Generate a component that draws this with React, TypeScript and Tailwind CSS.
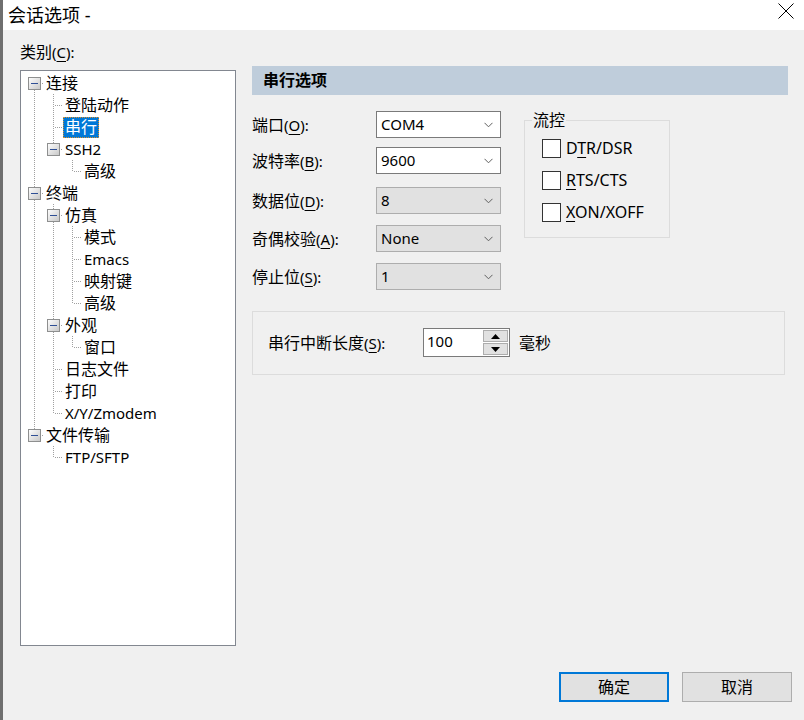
import React from 'react';

type Item = { label: string; level: number; expander?: boolean; selected?: boolean };

const items: Item[] = [
  { label: '连接', level: 0, expander: true },
  { label: '登陆动作', level: 1 },
  { label: '串行', level: 1, selected: true },
  { label: 'SSH2', level: 1, expander: true },
  { label: '高级', level: 2 },
  { label: '终端', level: 0, expander: true },
  { label: '仿真', level: 1, expander: true },
  { label: '模式', level: 2 },
  { label: 'Emacs', level: 2 },
  { label: '映射键', level: 2 },
  { label: '高级', level: 2 },
  { label: '外观', level: 1, expander: true },
  { label: '窗口', level: 2 },
  { label: '日志文件', level: 1 },
  { label: '打印', level: 1 },
  { label: 'X/Y/Zmodem', level: 1 },
  { label: '文件传输', level: 0, expander: true },
  { label: 'FTP/SFTP', level: 1 },
];

const CJK = /([\u3400-\u9fff]+)/;

function T({ s }: { s: string }) {
  return (
    <>
      {s.split(CJK).map((p, i) =>
        i % 2 === 1 ? (
          <span key={i} className="text-[16px]">
            {p}
          </span>
        ) : (
          <React.Fragment key={i}>{p}</React.Fragment>
        )
      )}
    </>
  );
}

type Row = Item & { hasNext: boolean; cont: boolean[]; first: boolean };

function buildRows(): Row[] {
  const cont: boolean[] = [];
  return items.map((it, i) => {
    let hasNext = false;
    for (let j = i + 1; j < items.length; j++) {
      if (items[j].level < it.level) break;
      if (items[j].level === it.level) {
        hasNext = true;
        break;
      }
    }
    const row: Row = { ...it, hasNext, cont: cont.slice(0, it.level), first: i === 0 };
    cont[it.level] = hasNext;
    return row;
  });
}

const DOT = '#a0a0a0';

function Cell({ full, own, top, bottom, expander }: { full?: boolean; own?: boolean; top?: boolean; bottom?: boolean; expander?: boolean }) {
  return (
    <svg width="19" height="22" className="shrink-0 block" shapeRendering="crispEdges">
      <defs>
        <linearGradient id="exg" x1="0" y1="0" x2="1" y2="1">
          <stop offset="0" stopColor="#ffffff" />
          <stop offset="1" stopColor="#c6c6c6" />
        </linearGradient>
      </defs>
      {full && <line x1="9.5" y1="0" x2="9.5" y2="22" stroke={DOT} strokeDasharray="1 1" />}
      {own && top && <line x1="9.5" y1="0" x2="9.5" y2="11" stroke={DOT} strokeDasharray="1 1" />}
      {own && bottom && <line x1="9.5" y1="12" x2="9.5" y2="22" stroke={DOT} strokeDasharray="1 1" />}
      {own && <line x1="11" y1="11.5" x2="19" y2="11.5" stroke={DOT} strokeDasharray="1 1" />}
      {expander && (
        <g>
          <rect x="3.5" y="5.5" width="12" height="12" fill="url(#exg)" stroke="#8e8f8f" />
          <line x1="6" y1="11.5" x2="13" y2="11.5" stroke="#2f4f95" />
        </g>
      )}
    </svg>
  );
}

function Tree() {
  const rows = buildRows();
  return (
    <div className="h-[576px] border border-[#828790] bg-white pl-[4px] pt-[1px]">
      {rows.map((r, i) => {
        const cells = [];
        for (let k = 0; k < r.level; k++) {
          cells.push(<Cell key={k} full={r.cont[k]} />);
        }
        cells.push(<Cell key="own" own top={!r.first} bottom={r.hasNext} expander={r.expander} />);
        return (
          <div key={i} className="flex h-[22px] items-center">
            {cells}
            {r.selected ? (
              <span className="px-[1px] h-[21px] leading-[19px] bg-[#0078d7] text-white border border-dotted border-[#d8902f]">
                <T s={r.label} />
              </span>
            ) : (
              <span className="px-[2px] leading-[21px]">
                <T s={r.label} />
              </span>
            )}
          </div>
        );
      })}
    </div>
  );
}

function Chevron() {
  return (
    <svg width="9" height="6" viewBox="0 0 9 6" className="block">
      <polyline points="0.5,0.8 4.5,4.8 8.5,0.8" fill="none" stroke="#606060" strokeWidth="1" />
    </svg>
  );
}

function Combo({ value, editable }: { value: string; editable?: boolean }) {
  return (
    <div
      className={
        'w-[125px] h-[27px] border flex items-center justify-between pl-[4px] pr-[7px] ' +
        (editable ? 'bg-white border-[#7a7a7a]' : 'bg-[#e1e1e1] border-[#adadad]')
      }
    >
      <span>{value}</span>
      <Chevron />
    </div>
  );
}

function Check({ children }: { children: React.ReactNode }) {
  return (
    <div className="flex items-center h-[19px]">
      <div className="w-[19px] h-[19px] border border-[#333333] bg-white shrink-0" />
      <span className="ml-[5px] leading-[19px] text-[16px]">{children}</span>
    </div>
  );
}

function U({ children }: { children: React.ReactNode }) {
  return <span className="underline underline-offset-[3px] decoration-1">{children}</span>;
}

export default function App() {
  const formRows: { label: React.ReactNode; value: string; editable?: boolean; mt: string }[] = [
    { label: <><T s="端口" />(<U>O</U>):</>, value: 'COM4', editable: true, mt: 'mt-[16px]' },
    { label: <><T s="波特率" />(<U>B</U>):</>, value: '9600', editable: true, mt: 'mt-[9px]' },
    { label: <><T s="数据位" />(<U>D</U>):</>, value: '8', mt: 'mt-[13px]' },
    { label: <><T s="奇偶校验" />(<U>A</U>):</>, value: 'None', mt: 'mt-[11px]' },
    { label: <><T s="停止位" />(<U>S</U>):</>, value: '1', mt: 'mt-[11px]' },
  ];
  return (
    <div className="w-[804px] h-[720px] flex overflow-hidden text-[15px] text-black font-['Noto_Sans','Noto_Sans_CJK_SC',sans-serif]">
      <div className="w-[3px] bg-[#6f6f6f] shrink-0" />
      <div className="flex-1 flex flex-col">
        <div className="h-[30px] shrink-0 bg-white flex items-center justify-between pl-[5px] pr-[10px]">
          <span className="text-[18px] leading-[24px]">会话选项 -</span>
          <svg width="16" height="16" viewBox="0 0 16 16" className="block -mt-[9px]">
            <path d="M0.5 0.5 L15.5 15.5 M15.5 0.5 L0.5 15.5" stroke="#000" strokeWidth="1" fill="none" />
          </svg>
        </div>
        <div className="flex-1 bg-[#f0f0f0] flex flex-col">
          <div className="flex">
            <div className="ml-[17px] w-[216px] flex flex-col">
              <div className="mt-[12px] h-[20px] leading-[20px]">
                <T s="类别" />(<U>C</U>):
              </div>
              <div className="mt-[8px]">
                <Tree />
              </div>
            </div>
            <div className="ml-[16px] w-[536px] pt-[36px] flex flex-col">
              <div className="h-[29px] bg-[#bfcddb] pl-[11px] leading-[29px] font-bold text-[16px]">串行选项</div>
              <div className="flex">
                <div className="flex flex-col w-[249px]">
                  {formRows.map((r, i) => (
                    <div key={i} className={'flex items-center ' + r.mt}>
                      <div className="w-[124px]">{r.label}</div>
                      <Combo value={r.value} editable={r.editable} />
                    </div>
                  ))}
                </div>
                <div className="ml-[23px] mt-[25px] w-[146px] h-[118px] border border-[#dcdcdc] relative pl-[17px] pt-[18px]">
                  <span className="absolute left-[7px] -top-[11px] px-[1px] bg-[#f0f0f0] leading-[20px] text-[16px]">流控</span>
                  <div className="flex flex-col gap-[13px]">
                    <Check>D<U>T</U>R/DSR</Check>
                    <Check><U>R</U>TS/CTS</Check>
                    <Check><U>X</U>ON/XOFF</Check>
                  </div>
                </div>
              </div>
              <div className="mt-[21px] w-[533px] border border-[#dcdcdc] pl-[15px] pt-[16px] pb-[17px] flex items-center">
                <div className="w-[155px]">
                  <T s="串行中断长度" />(<U>S</U>):
                </div>
                <div className="flex h-[29px] border border-[#7a7a7a] bg-white">
                  <div className="w-[59px] pl-[3px] leading-[25px]">100</div>
                  <div className="w-[26px] flex flex-col gap-[1px] p-[1px] pl-0">
                    <div className="flex-1 bg-[#e1e1e1] border border-[#adadad] flex items-center justify-center">
                      <svg width="9" height="5" viewBox="0 0 9 5" className="block"><polygon points="4.5,0 9,5 0,5" fill="#000" /></svg>
                    </div>
                    <div className="flex-1 bg-[#e1e1e1] border border-[#adadad] flex items-center justify-center">
                      <svg width="9" height="5" viewBox="0 0 9 5" className="block"><polygon points="0,0 9,0 4.5,5" fill="#000" /></svg>
                    </div>
                  </div>
                </div>
                <span className="ml-[9px] text-[16px]">毫秒</span>
              </div>
            </div>
          </div>
          <div className="mt-auto mb-[18px] flex justify-end gap-[13px] pr-[12px] text-[16px]">
            <button className="w-[110px] h-[30px] border-2 border-[#0078d7] bg-[#e1e1e1]">确定</button>
            <button className="w-[110px] h-[30px] border border-[#adadad] bg-[#e1e1e1]">取消</button>
          </div>
        </div>
      </div>
    </div>
  );
}
